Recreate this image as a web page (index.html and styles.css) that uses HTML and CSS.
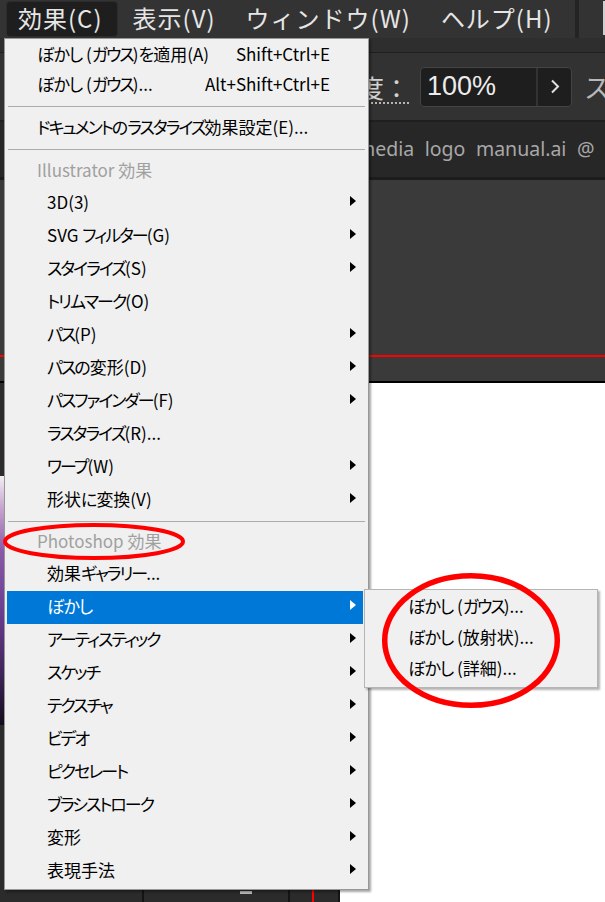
FILE: index.html
```html
<!DOCTYPE html>
<html lang="ja">
<head>
<meta charset="utf-8">
<title>効果メニュー</title>
<link rel="stylesheet" href="styles.css">
</head>
<body>
<div class="app">
  <div class="menubar">
    <div class="mb-item active">効果(C)</div>
    <div class="mb-item">表示(V)</div>
    <div class="mb-item">ウィンドウ(W)</div>
    <div class="mb-item">ヘルプ(H)</div>
    <div class="mb-spacer"></div>
    <div class="mb-grip"></div>
    <div class="mb-edge"></div>
  </div>
  <div class="subbar"></div>
  <div class="controlbar">
    <span class="ctl-label">不透明度：</span>
    <div class="field">
      <span class="field-value">100%</span>
      <span class="field-step">
        <svg width="10" height="15" viewBox="0 0 10 15"><path d="M2 1.5 L8 7.5 L2 13.5" fill="none" stroke="#e0e0e0" stroke-width="2"/></svg>
      </span>
    </div>
    <span class="ctl-label2">スタイル</span>
  </div>
  <div class="tabbar"><span class="tab-title">media logo manual.ai @ 50% (RGB/プレビュー)</span></div>
  <div class="canvas"><div class="guide"></div></div>
  <div class="lower">
    <div class="left-panel">
      <div class="left-top"><div class="thumb"></div></div>
      <div class="timeline">
        <div class="seg s1"></div><div class="tl-line"></div>
        <div class="seg s2"><span class="nub"></span></div><div class="tl-line"></div>
        <div class="seg s3"></div><div class="tl-red"></div>
        <div class="seg s4"></div><div class="tl-line"></div>
      </div>
    </div>
    <div class="artboard"></div>
  </div>
</div>

<div class="menu">
  <div class="row top"><span><span class="h">ぼかし</span> (<span class="k">ガウス</span>)<span class="h">を</span>適用(A)</span><span class="shortcut">Shift+Ctrl+E</span></div>
  <div class="row top"><span><span class="h">ぼかし</span> (<span class="k">ガウス</span>)...</span><span class="shortcut">Alt+Shift+Ctrl+E</span></div>
  <div class="sep"></div>
  <div class="row top"><span><span class="k">ドキュメント</span><span class="h">の</span><span class="k">ラスタライズ</span>効果設定(E)...</span></div>
  <div class="sep"></div>
  <div class="hdr">Illustrator 効果</div>
  <div class="row"><span>3D(3)</span><i class="arrow"></i></div>
  <div class="row"><span>SVG <span class="k">フィルター</span>(G)</span><i class="arrow"></i></div>
  <div class="row"><span><span class="k">スタイライズ</span>(S)</span><i class="arrow"></i></div>
  <div class="row"><span><span class="k">トリムマーク</span>(O)</span></div>
  <div class="row"><span><span class="k">パス</span>(P)</span><i class="arrow"></i></div>
  <div class="row"><span><span class="k">パス</span><span class="h">の</span>変形(D)</span><i class="arrow"></i></div>
  <div class="row"><span><span class="k">パスファインダー</span>(F)</span><i class="arrow"></i></div>
  <div class="row"><span><span class="k">ラスタライズ</span>(R)...</span></div>
  <div class="row"><span><span class="k">ワープ</span>(W)</span><i class="arrow"></i></div>
  <div class="row"><span>形状<span class="h">に</span>変換(V)</span><i class="arrow"></i></div>
  <div class="sep tight"></div>
  <div class="hdr">Photoshop 効果</div>
  <div class="row"><span>効果<span class="k">ギャラリー</span>...</span></div>
  <div class="row selected"><span class="h">ぼかし</span><i class="arrow"></i></div>
  <div class="row"><span class="k">アーティスティック</span><i class="arrow"></i></div>
  <div class="row"><span class="k">スケッチ</span><i class="arrow"></i></div>
  <div class="row"><span class="k">テクスチャ</span><i class="arrow"></i></div>
  <div class="row"><span class="k">ビデオ</span><i class="arrow"></i></div>
  <div class="row"><span class="k">ピクセレート</span><i class="arrow"></i></div>
  <div class="row"><span class="k">ブラシストローク</span><i class="arrow"></i></div>
  <div class="row"><span>変形</span><i class="arrow"></i></div>
  <div class="row"><span>表現手法</span><i class="arrow"></i></div>
</div>

<div class="submenu">
  <div class="sub-row"><span class="h">ぼかし</span>&nbsp;(<span class="k">ガウス</span>)...</div>
  <div class="sub-row"><span class="h">ぼかし</span>&nbsp;(放射状)...</div>
  <div class="sub-row"><span class="h">ぼかし</span>&nbsp;(詳細)...</div>
</div>

<svg class="marks" width="605" height="902" viewBox="0 0 605 902">
  <ellipse cx="94" cy="541.5" rx="89" ry="16.5" fill="none" stroke="#ff0000" stroke-width="4"/>
  <ellipse cx="471" cy="640.5" rx="86.3" ry="64.8" fill="none" stroke="#ff0000" stroke-width="5.5"/>
</svg>
</body>
</html>
```
FILE: styles.css
```css
* { box-sizing: border-box; margin: 0; padding: 0; }
html, body { width: 605px; height: 902px; overflow: hidden; }
body {
  position: relative;
  background: #2b2b2b;
  font-family: "Noto Sans CJK JP", "Noto Sans", sans-serif;
}
.app { display: flex; flex-direction: column; height: 902px; overflow: hidden; }

/* menu bar */
.menubar {
  height: 38px;
  flex: none;
  background: #333333;
  display: flex;
  align-items: stretch;
  gap: 3px;
  padding: 1px 0 1px 6px;
  color: #e6e6e6;
  font-size: 24px;
  letter-spacing: 1px;
  white-space: nowrap;
}
.mb-item {
  flex: none;
  display: flex;
  align-items: center;
  padding: 0 14px 3px 11px;
  border-radius: 4px;
  border: 1px solid transparent;
}
.mb-item.active { background: #1e1e1e; border-color: #2c2c2c; }
.mb-spacer { flex: 1; }
.mb-grip { flex: none; width: 4px; background: #242424; margin: -1px 21px -1px 0; }
.mb-edge { flex: none; width: 2px; background: #cfcfcf; margin-bottom: 2px; }

.subbar { height: 15px; flex: none; background: #2e2e2e; border-bottom: 1px solid #1f1f1f; }

.controlbar {
  height: 69px;
  flex: none;
  background: #323232;
  border-bottom: 2px solid #1f1f1f;
  display: flex;
  align-items: center;
  white-space: nowrap;
  color: #d2d2d2;
  overflow: hidden;
}
.ctl-label {
  flex: none;
  margin-left: 284px;
  font-size: 25px;
  line-height: 30px;
  border-bottom: 2px dotted #b5b5b5;
  margin-top: 2px;
}
.field {
  flex: none;
  margin-left: 11px;
  width: 152px;
  height: 40px;
  display: flex;
  border: 1px solid #444444;
  border-radius: 4px;
  background: #1e1e1e;
}
.field-value {
  flex: 1;
  display: flex;
  align-items: center;
  padding-left: 6px;
  font-family: "Liberation Sans", sans-serif;
  font-size: 27px;
  color: #ececec;
}
.field-step {
  flex: none;
  width: 35px;
  border-left: 2px solid #333333;
  display: flex;
  align-items: center;
  justify-content: center;
}
.ctl-label2 { flex: none; margin-left: 12px; font-size: 26px; color: #b8b8b8; }

.tabbar {
  height: 58px;
  flex: none;
  background: #272727;
  border-bottom: 3px solid #1c1c1c;
  display: flex;
  align-items: center;
  white-space: nowrap;
  padding-left: 357px;
  padding-bottom: 2px;
  overflow: hidden;
}
.tab-title {
  flex: none;
  font-family: "Noto Sans", sans-serif;
  font-size: 19.5px;
  color: #a8a8a8;
  word-spacing: 5.5px;
}

.canvas {
  height: 203px;
  flex: none;
  background: #3a3a3a;
  border-bottom: 2px solid #000000;
  padding-top: 175px;
}
.guide { height: 2px; background: #ff0000; }

.lower { flex: 1; display: flex; }
.left-panel { width: 340px; background: #2c2c2c; display: flex; flex-direction: column; }
.left-top { flex: 1; }
.thumb {
  margin-top: 93px;
  width: 8px;
  height: 249px;
  background: linear-gradient(#f4eef4 0%, #c9a8d2 12%, #8a5aa8 30%, #6a3d90 55%, #3c2458 80%, #140c1c 100%);
}
.timeline { height: 12px; display: flex; background: #2b2b2b; }
.seg { height: 100%; }
.s1 { width: 142px; }
.s2 { width: 144px; position: relative; }
.s3 { width: 22px; }
.s4 { width: 24px; }
.nub { position: absolute; left: 96px; top: 1px; width: 12px; height: 3px; background: #b8b8b8; }
.tl-line { width: 2px; background: #141414; }
.tl-red { width: 2px; background: #ff0000; }
.artboard { flex: 1; background: #ffffff; }

/* main dropdown menu */
.menu {
  position: absolute;
  left: 4px;
  top: 38px;
  width: 365px;
  background: #f0f0f0;
  border: 1px solid #979797;
  box-shadow: 2px 2px 2px rgba(0, 0, 0, 0.35);
  padding: 1px 5px 1px 2px;
  font-size: 17px;
  color: #000000;
  white-space: nowrap;
  font-feature-settings: "palt";
}
.k { letter-spacing: -2px; }
.h { letter-spacing: -1px; }
.row {
  height: 33px;
  display: flex;
  align-items: center;
  padding-left: 40px;
  padding-bottom: 4px;
}
.row.top { height: 30px; padding-left: 30px; }
.hdr {
  height: 31px;
  display: flex;
  align-items: center;
  padding-left: 30px;
  padding-bottom: 4px;
  color: #a0a0a0;
}
.sep { height: 1px; background: #ababab; margin: 6px -2px 6px 1px; }
.sep.tight { margin: 4px -2px 5px 1px; }
.shortcut { margin-left: auto; margin-right: 33px; }
.arrow {
  margin-left: auto;
  margin-right: 7px;
  margin-bottom: 1px;
  width: 0;
  height: 0;
  border-left: 6px solid #000000;
  border-top: 5px solid transparent;
  border-bottom: 5px solid transparent;
}
.row.selected { background: #0078d7; color: #ffffff; }
.row.selected .arrow { border-left-color: #ffffff; }

/* submenu */
.submenu {
  position: absolute;
  left: 364px;
  top: 589px;
  width: 234px;
  background: #f0f0f0;
  border: 1px solid #b5b5b5;
  box-shadow: 2px 2px 2px rgba(0, 0, 0, 0.3);
  padding: 2px 0;
  font-size: 17px;
  color: #000000;
  white-space: nowrap;
  font-feature-settings: "palt";
}
.sub-row { height: 31px; display: flex; align-items: center; padding-left: 43px; padding-bottom: 4px; }

.marks { position: absolute; left: 0; top: 0; pointer-events: none; }
```
